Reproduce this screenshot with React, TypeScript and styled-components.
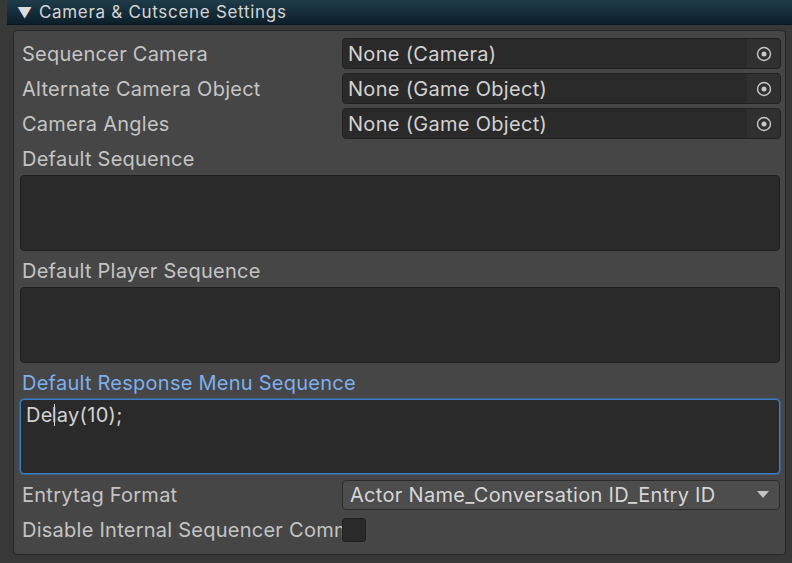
import React from 'react';
import styled, { createGlobalStyle } from 'styled-components';

const GlobalStyle = createGlobalStyle`
  html, body {
    margin: 0;
    padding: 0;
    background: #383838;
    font-family: Inter, "Noto Sans", sans-serif;
    overflow: hidden;
  }
`;

const Page = styled.div`
  width: 792px;
  height: 563px;
  padding-left: 7px;
  box-sizing: border-box;
  display: flex;
  flex-direction: column;
`;

const Header = styled.div`
  height: 24px;
  flex-shrink: 0;
  display: flex;
  align-items: center;
  gap: 6px;
  padding-left: 10px;
  background: linear-gradient(#1f3c4a, #0c1f29);
  border-bottom: 1px solid #0a171e;
  color: #d4d4d4;
  font-size: 17px;
  letter-spacing: 0.7px;
`;

const Arrow = styled.span`
  font-size: 15px;
  color: #dcdcdc;
`;

const Body = styled.div`
  padding: 5px 6px 0 6px;
`;

const Panel = styled.div`
  height: 525px;
  box-sizing: border-box;
  background: #464646;
  border: 1px solid #262626;
  border-radius: 4px;
  padding: 3px 4px 0 6px;
  display: flex;
  flex-direction: column;
`;

const Row = styled.div<{ $gap?: number }>`
  display: grid;
  grid-template-columns: 322px 1fr;
  align-items: center;
  height: 31px;
  margin-top: ${(p) => p.$gap ?? 4}px;
`;

const Label = styled.div<{ $focused?: boolean }>`
  padding-left: 2px;
  padding-right: 4px;
  font-size: 20px;
  letter-spacing: 0.25px;
  color: ${(p) => (p.$focused ? '#7dafef' : '#c4c4c4')};
  white-space: nowrap;
  overflow: hidden;
`;

const SectionLabel = styled(Label)`
  height: 32px;
  margin-top: 4px;
  display: flex;
  align-items: center;
`;

const ObjectField = styled.div`
  height: 31px;
  box-sizing: border-box;
  display: flex;
  align-items: stretch;
  background: #2a2a2a;
  border: 1px solid #212121;
  border-radius: 4px;
  overflow: hidden;
`;

const FieldText = styled.div`
  flex: 1;
  display: flex;
  align-items: center;
  padding-left: 5px;
  font-size: 20px;
  letter-spacing: 0.3px;
  color: #d2d2d2;
  white-space: nowrap;
`;

const PickerButton = styled.div`
  width: 33px;
  display: flex;
  align-items: center;
  justify-content: center;
  background: #303030;
`;

const TextArea = styled.div<{ $focused?: boolean }>`
  height: ${(p) => (p.$focused ? 75 : 76)}px;
  box-sizing: border-box;
  background: #2a2a2a;
  border: 1px solid ${(p) => (p.$focused ? '#3b7dc4' : '#1f1f1f')};
  box-shadow: ${(p) => (p.$focused ? '0 0 0 0.5px #3b7dc4' : 'none')};
  border-radius: 4px;
  padding: 3px 5px;
  font-size: 20px;
  letter-spacing: 0.3px;
  color: #d2d2d2;
  margin-right: 1px;
`;

const Caret = styled.span`
  display: inline-block;
  width: 1px;
  height: 22px;
  background: #dadada;
  vertical-align: -4px;
  margin: 0 -3px 0 1px;
`;

const Popup = styled.div`
  height: 30px;
  box-sizing: border-box;
  display: flex;
  align-items: center;
  justify-content: space-between;
  padding: 0 10px 0 7px;
  background: #4d4d4d;
  border: 1px solid #2b2b2b;
  border-radius: 4px;
  font-size: 20px;
  letter-spacing: 0.3px;
  color: #d6d6d6;
  margin-right: 1px;
  white-space: nowrap;
`;

const DropArrow = styled.span`
  width: 0;
  height: 0;
  border-left: 6px solid transparent;
  border-right: 6px solid transparent;
  border-top: 7px solid #c4c4c4;
`;

const Checkbox = styled.div`
  width: 24px;
  height: 24px;
  box-sizing: border-box;
  background: #2a2a2a;
  border: 1px solid #202020;
  border-radius: 3px;
`;

const PickerIcon = () => (
  <svg width="16" height="16" viewBox="0 0 16 16">
    <circle cx="8" cy="8" r="6.5" fill="none" stroke="#c8c8c8" strokeWidth="1.4" />
    <circle cx="8" cy="8" r="2.5" fill="#c8c8c8" />
  </svg>
);

const objectFields = [
  { label: 'Sequencer Camera', value: 'None (Camera)' },
  { label: 'Alternate Camera Object', value: 'None (Game Object)' },
  { label: 'Camera Angles', value: 'None (Game Object)' },
];

const App: React.FC = () => {
  return (
    <>
      <GlobalStyle />
      <Page>
        <Header>
          <Arrow>▼</Arrow>
          <span>Camera &amp; Cutscene Settings</span>
        </Header>
        <Body>
          <Panel>
            {objectFields.map((f) => (
              <Row key={f.label}>
                <Label>{f.label}</Label>
                <ObjectField>
                  <FieldText>{f.value}</FieldText>
                  <PickerButton>
                    <PickerIcon />
                  </PickerButton>
                </ObjectField>
              </Row>
            ))}

            <SectionLabel>Default Sequence</SectionLabel>
            <TextArea />

            <SectionLabel>Default Player Sequence</SectionLabel>
            <TextArea />

            <SectionLabel $focused>Default Response Menu Sequence</SectionLabel>
            <TextArea $focused>
              De<Caret />lay(10);
            </TextArea>

            <Row $gap={5}>
              <Label>Entrytag Format</Label>
              <Popup>
                <span>Actor Name_Conversation ID_Entry ID</span>
                <DropArrow />
              </Popup>
            </Row>

            <Row>
              <Label>Disable Internal Sequencer Commands</Label>
              <Checkbox />
            </Row>
          </Panel>
        </Body>
      </Page>
    </>
  );
};

export default App;
